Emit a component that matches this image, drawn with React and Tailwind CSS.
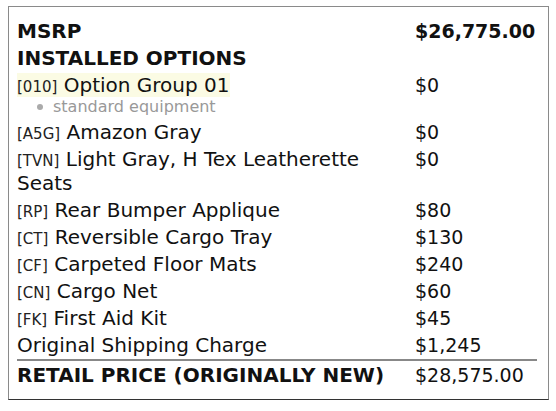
import React from "react";

const rows = [
  { code: "A5G", name: "Amazon Gray", price: "$0" },
  { code: "TVN", name: "Light Gray, H Tex Leatherette Seats", price: "$0" },
  { code: "RP", name: "Rear Bumper Applique", price: "$80" },
  { code: "CT", name: "Reversible Cargo Tray", price: "$130" },
  { code: "CF", name: "Carpeted Floor Mats", price: "$240" },
  { code: "CN", name: "Cargo Net", price: "$60" },
  { code: "FK", name: "First Aid Kit", price: "$45" },
];

function Row({ left, right, children }) {
  return (
    <div className="grid grid-cols-[1fr_122px] gap-x-[9px]">
      <div className="text-[20px]">
        {left}
        {children}
      </div>
      <div className="text-[19px]">{right}</div>
    </div>
  );
}

function Code({ children }) {
  return <span className="text-[15px] leading-none text-[#222]">[{children}]</span>;
}

export default function App() {
  return (
    <div className="bg-white w-[556px] h-[411px] pt-[6px] pl-[8px] font-['DejaVu_Sans',sans-serif] text-[#111]">
      <div className="w-[541px] border border-[#8a8a8a] border-b-[#333] pt-[12px] pb-[12px] pl-[8px] pr-[11px]">
        <div className="flex flex-col gap-[3px] leading-[24px]">
          <Row left={<span className="font-bold">MSRP</span>} right={<span className="font-bold">$26,775.00</span>} />
          <Row left={<span className="font-bold">INSTALLED OPTIONS</span>} right={null} />
          <Row
            left={
              <span className="bg-[#fbfbe4] inline-block">
                <Code>010</Code> Option Group 01
              </span>
            }
            right="$0"
          >
            <ul className="pl-[20px] text-[16px] leading-[20px] text-[#999]">
              <li className="flex items-center">
                <span className="w-[6px] h-[6px] rounded-full bg-[#aaa] mr-[10px]"></span>
                standard equipment
              </li>
            </ul>
          </Row>
          {rows.map((r) => (
            <Row
              key={r.code}
              left={
                <>
                  <Code>{r.code}</Code> {r.name}
                </>
              }
              right={r.price}
            />
          ))}
          <Row left="Original Shipping Charge" right="$1,245" />
          <div className="h-[2px] bg-[#888] -my-px"></div>
          <Row left={<span className="font-bold">RETAIL PRICE (ORIGINALLY NEW)</span>} right="$28,575.00" />
        </div>
      </div>
    </div>
  );
}
